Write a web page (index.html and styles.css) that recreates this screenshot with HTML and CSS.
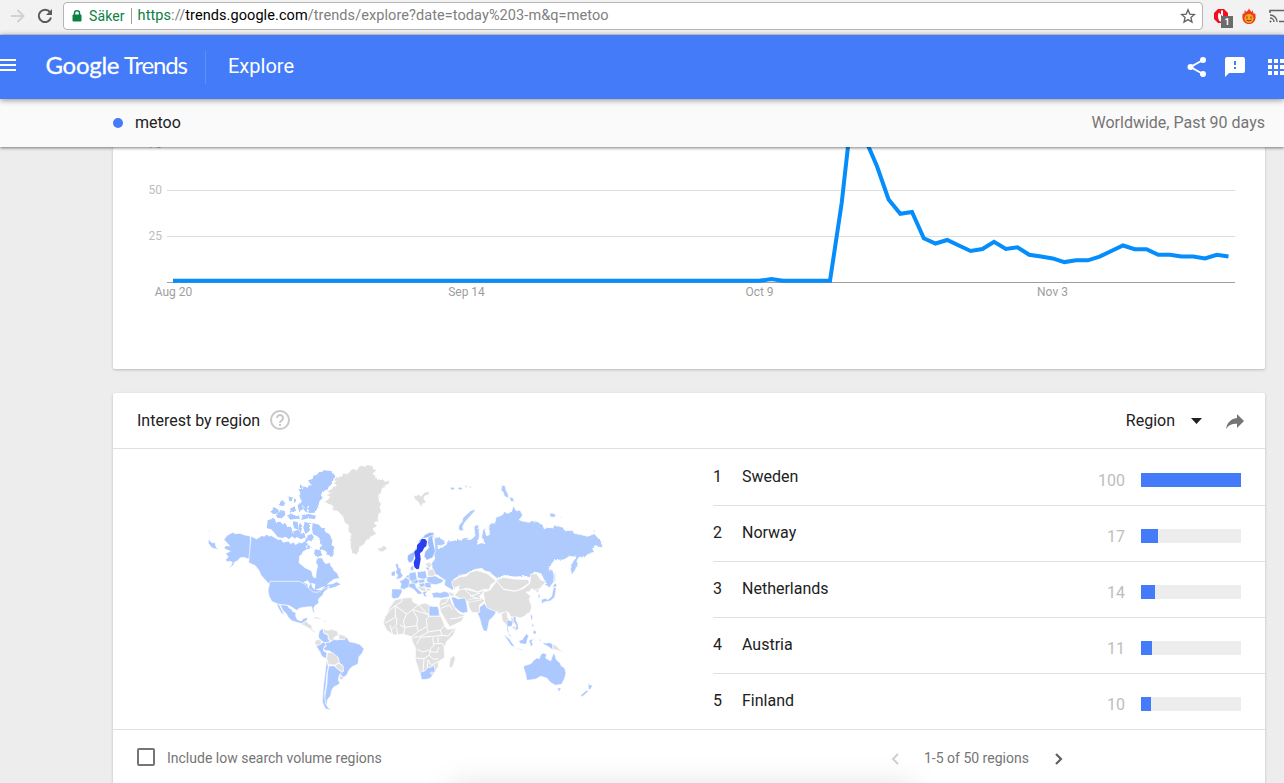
FILE: index.html
```html
<!DOCTYPE html>
<html lang="en">
<head>
    <meta charset="UTF-8">
    <title>metoo - Explore - Google Trends</title>
    <link rel="stylesheet" href="styles.css">
</head>
<body>
    <div class="toolbar">
        <svg class="forward" width="16" height="16" viewBox="0 0 16 16"><path d="M1 8h12M7.500 2l6 6-6 6" fill="none" stroke="#d2d2d2" stroke-width="2"/></svg>
        <svg class="reload" width="16" height="16" viewBox="0 0 16 16"><path d="M13 4.200A6.200 6.200 0 1 0 14 9.500" fill="none" stroke="#5a5a5a" stroke-width="2"/><path d="M15 1v6H9z" fill="#5a5a5a"/></svg>
        <div class="address">
            <svg class="lock" width="10" height="12" viewBox="0 0 10 12"><path d="M1 5h8v6H1z" fill="#0b8043" stroke="#0b8043"/><path d="M2.500 5V3a2.500 2.200 0 0 1 5 0v2" fill="none" stroke="#0b8043" stroke-width="1.500"/></svg>
            <span class="secure">Säker</span>
            <span class="url"><span class="green">https</span>://<b>trends.google.com</b>/trends/explore?date=today%203-m&amp;q=metoo</span>
            <svg class="star" width="16" height="16" viewBox="0 0 16 16"><path d="M8 1.800l1.800 4.300 4.700.4-3.600 3 1.100 4.600L8 11.600l-4 2.500 1.100-4.600-3.600-3 4.700-.4z" fill="none" stroke="#5f6368" stroke-width="1.300"/></svg>
        </div>
        <div class="extensions">
            <div class="blocker">
                <svg width="16" height="16" viewBox="0 0 16 16"><path d="M5 1h6l4 4v6l-4 4H5l-4-4V5z" fill="#f1101c"/><path d="M6 4.500C4.500 6 4.500 11 7 13.500h2L8 10V2.500h2V9" fill="#fff"/></svg>
                <span class="count">1</span>
            </div>
            <svg class="flame" width="14" height="16" viewBox="0 0 14 16"><path d="M7 0c0 2 2 2 2 4 1 0 1-1 1-2 2 3 1 3 2 4l1-1c2 6-1 11-6 11S-1 11 1 5l1 1c1-1 0-2 1-4l1 2c1-1 3-2 3-4z" fill="#ee3b1c"/><circle cx="7" cy="10.500" r="4.500" fill="#f9a825"/><path d="M5 8.500v2M9 8.500v2M4.500 12q2.500 2 5 0" fill="none" stroke="#7a2b0c"/></svg>
            <svg class="cast" width="17" height="14" viewBox="0 0 17 14"><path d="M1 4V1.500h15v11H10" fill="none" stroke="#5f6368" stroke-width="1.600"/><path d="M1 6a7 7 0 0 1 7 7M1 9a4 4 0 0 1 4 4" fill="none" stroke="#5f6368" stroke-width="1.400"/><circle cx="1.500" cy="12.500" r="1" fill="#5f6368"/></svg>
        </div>
    </div>

    <div class="header">
        <svg class="menu" width="16" height="12" viewBox="0 0 16 12"><path d="M0 1h16M0 6h16M0 11h16" stroke="#fff" stroke-width="2"/></svg>
        <svg class="logo" width="146" height="34" viewBox="0 0 146 34">
            <text class="google" x="-.5" y="23.500" textLength="74">Google</text>
            <text x="78" y="23.500" textLength="64">Trends</text>
        </svg>
        <span class="explore">Explore</span>
        <div class="actions">
            <svg width="20" height="20" viewBox="0 0 20 20"><path d="M16 3L3.500 10 16 17" fill="none" stroke="#fff" stroke-width="2"/><g fill="#fff"><circle cx="16" cy="3" r="3"/><circle cx="3.500" cy="10" r="3"/><circle cx="16" cy="17" r="3"/></g></svg>
            <svg width="20" height="20" viewBox="0 0 20 20"><path d="M2 0h16a2 2 0 0 1 2 2v12a2 2 0 0 1-2 2H4l-4 4V2a2 2 0 0 1 2-2z" fill="#fff"/><path d="M10 4v4M10 10v2" stroke="#437bf8" stroke-width="2"/></svg>
            <svg width="16" height="16" viewBox="0 0 16 16"><path d="M0 2h16M0 8h16M0 14h16" stroke="#fff" stroke-width="4" stroke-dasharray="4 2"/></svg>
        </div>
    </div>

    <div class="terms">
        <span class="dot"></span>
        <span class="term">metoo</span>
        <span class="scope">Worldwide, Past 90 days</span>
    </div>

    <div class="content">
        <div class="card chart">
            <svg width="1152" height="222" viewBox="113 147 1152 222">
                <path d="M167 190.500H1235M167 236.500H1235" stroke="#dedede"/>
                <path d="M167 282.500H1235" stroke="#9e9e9e"/>
                <g class="ylabel"><text x="162" y="148">75</text><text x="162" y="194">50</text><text x="162" y="240">25</text></g>
                <g class="xlabel"><text x="173.500" y="296">Aug 20</text><text x="466.500" y="296">Sep 14</text><text x="759.500" y="296">Oct 9</text><text x="1052.500" y="296">Nov 3</text></g>
                <polyline class="line" points="173,280.800 759.500,280.800 771.300,279 783,280.800 830,280.800 841.700,203 853.400,98 865.200,139 876.900,166 888.600,199.500 900.300,213.800 912,212 923.800,238.300 935.500,243.500 947.200,240 958.900,245.500 970.600,251 982.400,249 994.100,241.900 1005.800,249 1017.500,247.300 1029.200,254.800 1041,256.600 1052.700,258.400 1064.400,262.100 1076.100,260.300 1087.900,260.300 1099.600,256.600 1111.300,251 1123,245.500 1134.700,249.200 1146.500,249.200 1158.200,254.800 1169.900,254.800 1181.600,256.600 1193.300,256.600 1205,258.400 1216.800,254.800 1228.500,256.600"/>
            </svg>
        </div>

        <div class="card regions">
            <div class="card-head">
                <span class="title">Interest by region</span>
                <svg class="help" width="20" height="20" viewBox="0 0 20 20"><circle cx="10" cy="10" r="9" fill="none" stroke="#c8c8c8" stroke-width="2"/><path d="M7 8a3 3 0 1 1 5 2.200Q10 11.500 10 13M10 14v2" fill="none" stroke="#c8c8c8" stroke-width="2"/></svg>
                <span class="select">Region</span>
                <svg class="caret" width="11" height="6" viewBox="0 0 11 6"><path d="M0 0h11L5.500 6z" fill="#212121"/></svg>
                <svg class="share" width="18" height="15" viewBox="0 0 18 15"><path d="M11 0l7 7-7 7v-4.300C6 9.700 2.500 11 0 15 1 9.500 4 5 11 4z" fill="#757575"/></svg>
            </div>
            <div class="card-body">
                <div class="map">
                    <svg width="410" height="265" viewBox="0 0 1230 795">
                        <filter id="coast" x="-5%" y="-5%" width="110%" height="110%">
                            <feTurbulence type="fractalNoise" baseFrequency=".25" numOctaves="2" seed="4"/>
                            <feDisplacementMap in="SourceGraphic" scale="7" xChannelSelector="R" yChannelSelector="G"/>
                        </filter>
                        <!-- North America -->
                        <g class="land">
                            <path d="M72 254l8-12 18-10 8 4 14-1 14 5 17 3v69l-12-2-9-3-10 2-8 9-8 3-4 10-8 6-14 7 14-10 5-12-7-3-10 1-3-6 8-8-8-11 14-6-18-8 2-9 14 1z"/>
                            <path d="M25 252l12 12 8-2 3 14 8 7-14-2-8-4-9-12zM26 225l6 5-4 2z"/>
                            <path d="M153 243l17 9 15-10 8 2 7-6 6 5 9-1 20 12 7-2 8 10 15-4 7 8 9-5 5 8 12-7 7 2 10-6 2-13 10 10-8 8 8 3-9 9 5 8-14 7-4 9-6 4-2 20 18 15 20 10 4 17 8 4 2-21 4-15-6-12 6-13 14 1 5 12 7 5 10-4 5 13 5 3 2 8 11 9 7 15-17 3-10 7-10 8 17-2 10-6 8 4 7 4-18 8-12 4-15 1-20 10-15 8-12-2-8-13-15-10-15-8h-88l-12-13-10-11-8-17-10-13-20-9z"/>
                            <path d="M210 379h88l18 9 12 14 12 9 12 1 16-9 20-10-5 9-11 9-4 10-7 5-6 8 2 10-12 8-4 8 4 17-7-8-3-14-15 1-20 3-10 7-8-5-7-5-10-5-25-2-12-4-13-6-8-16-3-17z"/>
                            <path d="M240 449l22 2 6 9 7 2 2 7 11 4-1 10 5 11 12 4 8-8 12-3-5 12-14 7-15-4-15-5-11-11-6-11-9-8zM229 445l9 4 8 17 7 13-9-4-9-16z"/>
                        </g>
                        <g class="land arctic" filter="url(#coast)">
                            <path d="M324 76l14-5 2-9 10-3 8-9 8 1 5-5 16 1 6 4 13 11-4 12-8 8 3 4-11 9-2 8-16 6-5 12 5 9-9 7-3 12-3 8-6 8-16-4-6-9-10 5-14-12 6-9-7-6-2-10 4-7-7-10 14-1 1-8 13 4 4-8 8 2zM300 88l9 8-9 10zM300 112l10 6-8 10z"/>
                            <path d="M338 204l19 5 7 9 9 2 4 12 11 5 9 18-2 15 8 6-2 18-4 12-16-8-9-13-14-3 9-11-8-6 2-10-9-11-13-6-3-15zM203 196l20-6 5 12 10-2 10 8 9-2 6 10 10-1 7 25-13 13-9-7-11 3-14-3-11-14-5-8-17-5zM283 228l12-4 7 13 9-4 6 14-14 6-12-7-8 5-6-9zM322 242l12-6 8 10-8 13-12-5z"/>
                            <path d="M211 170l10-14 15 8-4 12-12 1zM228 182l12-17 14 3 2 12-11 10-12-1zM236 150l12-15 8 11-8 8zM261 182l11-7 13 8 10-4 5 12-17 1-12 2zM270 161l14-7 4 14-14 3zM293 150l13-7 3 20-12 6zM311 143l12 10-3 20-10-10zM323 160l18-12 11 10-8 15-18 1zM305 181l21-4 22 5-4 11-18-3-20 4zM278 199l15 2 3 23-14-4zM298 202l9 11-5 24-6-15zM314 201l16 4-2 24-12 8-6-18zM266 124l13 5-4 10-8-2zM241 138l4 5-5 5zM282 130l7 7-7 8zM345 283l15 3 7 15-14 5-11-10zM323 270l9 4-4 9-7-3z"/>
                        </g>
                        <path class="lake" d="M310 382l13-6 8 10-5 14-4-12zM333 383l13 4-2 17-8-8zM345 405l17-7 14-6-12 13zM322 310l8 12 7-5"/>
                        <path class="land grey" filter="url(#coast)" d="M370 140l13-6 7-8-12-6 14-5-12-8 15-5 4-8 11-1-8-8 5-5-8-8 14-5 13-3 2-9 16 1 8-9 6-6 14 3 4-9 13-5 3 5 12-6 14 4 2 8 9 5-11 11 12 5-3 8 13 3 8-1 8 8 11-4 2 8-10 7-11 5-4 16-8 10 2 18 8 4-7 13 6 10-9 11-2 19-12 7 10 8-14 10 12 15-18 8-5 8-9 4-7 13-12 5-2 13-7 12-12-5-6-15-2-24 2-20-8-8 2-17-12-8-6-19-16-16-18-4 5-11z"/>
                        <g class="land grey">
                            <path d="M533 278l10 1 8-8 11 8-9 8-7 4-11-4zM303 507l15-9 7 7 11 7-1 10 10 8 10-2-12 5-16-13-14-8zM335 488l15-3 20 9-16-2zM366 496l14 3-7 3z"/>
                        </g>
                        <!-- South America -->
                        <g class="land" transform="translate(0 345)">
                            <path d="M358 182l12-7 2 15 13 5v11l6 8-16 6-17-12-3-9z"/>
                            <path d="M348 228l14-7 8-5 12 6-10 10-1 11 10 5-2 18-14-7-5-13z"/>
                            <path d="M375 218l16-2 8-10 9 4 20-3 12-6 8 14 16 3 15 5 13 13-5 13-10 11-3 22-19 9-9 11-5 12-11 9-10-10 9-13-2-15-10-6-3-16-15-8-9-12-12-1-9-5 10-9z"/>
                            <path d="M386 288l16-1 18 16 10 1-12 11-3 15 5 9-8 7-10 4-7 11-3 16-10 13-2 17-5-9-1-18 7-40 1-30z"/>
                            <path d="M380 268l5 22-5 25-2 30-4 25 2 30 8 12 9 9-17-5-9-19 3-48 5-38z"/>
                        </g>
                        <g class="land grey" transform="translate(0 345)">
                            <path d="M370 178l15 3 8-3 17 4 6 12-13 8-6 11-12-5-1-15-12-3zM416 193l12 2 12 6-6 8-17-1zM347 210l15-1 3 11-14 8-7-9zM383 247l15 1 16 14 4 15-13 8-20-1-5-19zM404 285l14-5 12 9v15l-10-2-12-10zM419 314l13 8-4 8-11-3z"/>
                        </g>
                        <!-- Europe and Asia -->
                        <g class="land light" transform="translate(510 0)">
                            <path filter="url(#coast)" d="M187 345l-2-20 10-15-5-15 5-20-3-28 13 0 17 8 4 11-14 7-9-2 2 11 10-6 13-6 7-13 7 1 16-3 8-2 6 5 8-9 9-1 8 6 8-2 10-10-3-26 5-5 8-2 2 17 1 20-6 22 13-5 10 4-10-20 3-20 12-14-5 14 5 15 10-4-5-21 5-10 15-4 3-16 17-6 9-9 11 3 10-7 5-14 10 14 10-3 8 16-10 14 12 4 18 3 7-5 18 3 15 9 5 13 11-6 14 3 5-9 9 4 16 2 7 11 23-1 5 9 25 5 15 4 20-8 20 22 6 20-11-2-13-5-7 10 5 10-20 7-10 10-15-2-7 10 2 15-8 15-10 14-4-19 7-20 10-15-20-2-15 10-30 2-18 25 13 5 5 15-2 20-13 17-10-7-5-15-10-20-20-5-10 17-20-4-30 2-30-5-20 10-10-7-15-13-14-3-8-8-13 1-20 7-15 10-20 3-17 13 2 22-5 10-25-15 2-15-17-12-15-8z"/>
                            <path d="M315 163l-13 4-13 12-11 10-1 10-10 12-2 12 8 5 8-2-3-11 6-12 14-16 17-19zM396 90l10 3 2 13 6 10 2 14-13-6-3-12-7-6zM418 126l11 2 4 13-11-2zM538 174l11 1 10 5-7 7-11-1zM569 185l9 2-5 2zM554 348l3 10-1 24-4-2zM240 98l10-2 5 6-9 4zM262 100l10-4 8 7-11 2zM283 90l10 3-4 5zM296 96l9-2-3 6zM668 225l10 2-5 4z"/>
                            <path d="M185 414l15-3 11 2 12-4 14 4 2 12-24 5-14-2-11 1zM335 437l15 16 12 9 18 6-8 14-14 14-5 26-3 7-9-1-7-18-4-17-8-20 8-18 11-8zM380 465l20-1-8 12-10-2zM172 365l23-3 14 8 13 5-9 10-16 4-18-2-10-9z"/>
                            <path d="M515 433l12-3 6 4 12-10 3-16 3-11 8-2-2 17-3 15-13 11-15 2-12 7zM547 396l8-12 6 6-5 8zM504 413l7 11-6 8z"/>
                        </g>
                        <g class="land grey" transform="translate(510 0)">
                            <path d="M245 380l23-14 22-3 10-11 20-6 32 10 16 13 11 10-17 10-4 16-13-3-23 8-22-8-15-2-10 5-10-3 3-10-13 7-7-4zM378 376l22-9 30 5 45 2 3 10-23 16-20 8-35-6zM340 412l20-7 20-27 20 25 35 6 25-8 20-16 2-28 18-1 12 19 16 5-18 20-10 10-15-9-7 9-10 1 14 13-5 9 8 20-4 18-12 7-6 6-12 5-14-4-14 1-8-14-20 1-20-4-25-11-6-19z"/>
                            <path d="M266 405l19-3 37 10 23-6-8 9-8 8 5 12-23 4-16 3-25-12-16-8zM293 435l18-4 24-1 10 7-17 14 1 21-23 1-9-16zM212 433l28-5 8 22 17 23 20 8-10 17-36 18-12-21-15-25-5-24zM165 325l17-3 2 14-9 3zM173 345l16-4 8 18-8 5-16-1zM138 392l28 6 2 12-13-2zM168 400l15 0-5 9-9-2zM235 410l14 4 5 9-14 0zM494 405l15-4-5 13z"/>
                            <path d="M131 120l8 3 6-6 7 7 12-12 15-3-3 10-12 4-2 8 7 12-11 3-5 11-5-10-6-8-9-8zM394 476l16-8 3 18 8 18-12 7-13-16zM421 486l9 3 5 20-10-7zM428 514l10-2-3 12-9-4z"/>
                            <path class="line-only" d="M212 448l15-3 10-17M213 460l25-10 10 14M240 492l22-3 22-6M285 404l20 20 20 8M300 424l30-10"/>
                        </g>
                        <g class="land" transform="translate(510 0)">
                            <path d="M243 425l12 2 10 5 20-4 5 18 4 24-14 5-13-6-14-14z"/>
                            <path class="norway" d="M192 233l-12-1-7 3-9 4-5 8-12 9-7 19-8 15-14 7-6 6v12l6 9 7-2 6-8 5-18 10-30 14-16 20-3 11 1z"/>
                            <path class="norway" d="M175 247l13-7 1 16 7 33-8 19-18 8-8-12 3-14 11-12-4-14z"/>
                            <path class="dense" d="M76 328l8-2 2 12 7 4-1 9 7 11-8 8-13 3 6-12-7-9 4-8zM64 352l11-5v15l-10 1zM121 338l9-7 1 13-8 3zM89 378l11-4 7-7 12 9-2 19-15 8-11-3 3-13zM66 402l29 1 1 8-10 17-15 3-6-5zM118 354l19-3 4 23-14 6-11-8zM142 351l25-3 4 21-11 3-17-4zM108 363l9-4 2 11-10-3zM123 378l18-5 8 5-10 8-14-1zM144 375l20-2 0 9-16 3zM147 387l15-3 4 8-14 5zM164 383l17 0 3 15-18-1zM117 386l17-3 4 14 12 12 7 4-6 5-7-1-11-13-9-6-9-2zM158 412l14-4-6 9 5 9-9-3zM166 337l14 1-7 8z"/>
                            <path class="sweden" d="M150 262l5-10 10 0 6 7-2 14-7 6-4 9-8 7 2 18-3 16-2 12-7 2-7-7-2-14 5-12-3-20 8-8v-12z"/>
                        </g>
                        <!-- Africa -->
                        <g class="land grey" transform="translate(510 345)">
                            <path d="M75 90l20-5 30-3 3 13 17 9 20-5 13 6 25 5 3 15 9 20 10 25 7 8 26-3-8 20-20 20-8 20 2 27-19 16v12l-10 15-15 20-25 3-7-23-12-35 1-35-10-20-2-15-25-8-30 3-20-15-10-20 5-20 15-30zM253 255l3 12-10 27-8-4 2-24z"/>
                            <path class="line-only" d="M95 85v10L76 107l34 25 18-13 18-15M76 107l-17 14-12 17M76 107v35l-32 18M110 132l-10 22 5 18 35-5 3-22-15-26M128 119l49 15v4l-8 12 3 20M146 104l31 34h32M80 142v22l-15 15M60 165l8 30M90 165l15 7-5 22M80 172l2 20M140 167l5 18-20 15M145 185l24-15 6 16-25 14-20 2M175 186l36-6 12-12M211 180l5 16 18 2 18-20M216 196l-28 3-36 3-12 20M188 200l3 26-12 14-22 6-16-8M191 222l25-2 10 16M204 200v18M182 240l-4 15-16 11-25-2M178 245l24 2 4-16M162 266l-3 40M178 256l12 12 14-2M174 270l10 16 14-8 26-14M174 270l-2 27"/>
                        </g>
                        <g class="land" transform="translate(510 345)">
                            <path d="M177 107l10 3 16-1 4 12 1 17h-31zM150 307l15-4 8-10 9-1 11-6 2 18-13 20-11 4-16 1z"/>
                            <path class="dense" d="M412 150l16 4-2 14-13 2 3 20 9 11-7-4-7-18zM430 140l8 1-1 9 6 12 2 14-10 6 4-15-8-14zM402 193l16 14 17 25-12-6zM430 233l32 6-10 0zM447 212l10-3 6-9 6-8 7 5-4 10-4 16-18-3zM480 209l12-1-8 6 5 9-7 7-1-11-4-2zM482 133l5 4 0 13-4-4zM486 159l6 8-5 4zM492 180l7 6-3 7-7-4zM510 205l3 7-4 2zM517 218l12 2 8-2 11 4v17l-14-10-8-4z"/>
                            <path d="M460 290l6-4 17-5 7-9 10-8 8 2 4-12 8-5 10 4-3 11 15 9 8-23 5 6 4 13 12 11 3 8 10 6 4 15-4 16-9 18-19 3-15-9-11-13-18-5-14 8-17 3-11 1-3-18z"/>
                            <path class="dense" d="M562 354l11 1-6 10zM655 340l5 6 8-1-7 13-5 0zM650 361l5 2-12 12-8 5-2-4z"/>
                        </g>
                        <path class="land grey" transform="translate(510 345)" d="M549 221l13 9 5 7 14 10-20-6-12-3zM185 305l5 3-5 6-4-5zM352 183l4 3-4 4z"/>
                    </svg>
                </div>
                <div class="list">
                    <div class="row"><span class="rank">1</span><span class="name">Sweden</span><span class="value">100</span><div class="bar"><div class="fill" style="width: 100%"></div></div></div>
                    <div class="row"><span class="rank">2</span><span class="name">Norway</span><span class="value">17</span><div class="bar"><div class="fill" style="width: 17%"></div></div></div>
                    <div class="row"><span class="rank">3</span><span class="name">Netherlands</span><span class="value">14</span><div class="bar"><div class="fill" style="width: 14%"></div></div></div>
                    <div class="row"><span class="rank">4</span><span class="name">Austria</span><span class="value">11</span><div class="bar"><div class="fill" style="width: 11%"></div></div></div>
                    <div class="row"><span class="rank">5</span><span class="name">Finland</span><span class="value">10</span><div class="bar"><div class="fill" style="width: 10%"></div></div></div>
                </div>
            </div>
            <div class="card-foot">
                <span class="checkbox"></span>
                <span class="low">Include low search volume regions</span>
                <svg class="prev" width="8" height="12" viewBox="0 0 8 12"><path d="M7 1L2 6l5 5" fill="none" stroke="#d0d0d0" stroke-width="2"/></svg>
                <span class="pages">1-5 of 50 regions</span>
                <svg class="next" width="8" height="12" viewBox="0 0 8 12"><path d="M1 1l5 5-5 5" fill="none" stroke="#616161" stroke-width="2.200"/></svg>
            </div>
        </div>
    </div>
    <div class="dock"></div>
</body>
</html>
```
FILE: styles.css
```css
*{
    box-sizing: border-box;
}
html{
    overflow: hidden;
}
body{
    margin: 0;
    height: 783px;
    overflow: hidden;
    position: relative;
    background: #ededed;
    font-family: Roboto, sans-serif;
    font-size: 16px;
    color: #212121;
}
svg{
    display: block;
    flex: none;
}
span{
    white-space: nowrap;
}
/* browser bar */
.toolbar{
    display: flex;
    align-items: center;
    height: 35px;
    padding: 0 0 3px 10px;
    background: #f2f2f2;
    border-bottom: 1px solid #d5d5d5;
}
.reload{
    margin-left: 11px;
}
.address{
    display: flex;
    align-items: center;
    width: 1140px;
    height: 28px;
    margin-left: 10px;
    padding: 0 6px 0 8px;
    flex: none;
    background: #fff;
    border: 1px solid #b4b4b4;
    border-radius: 4px;
    font-size: 14.500px;
}
.secure{
    margin-left: 7px;
    padding-right: 6px;
    border-right: 1px solid #a0a0a0;
    font-size: 14px;
    letter-spacing: .1px;
    line-height: 16px;
    color: #0b8043;
}
.url{
    margin-left: 6px;
    letter-spacing: .08px;
    color: #808080;
}
.url b{
    font-weight: normal;
    color: #000;
}
.green{
    color: #0b8043;
}
.star{
    margin-left: auto;
}
.extensions{
    display: flex;
    align-items: center;
    margin-left: 10px;
}
.blocker{
    position: relative;
}
.count{
    position: absolute;
    left: 8px;
    top: 8px;
    width: 12px;
    height: 12px;
    background: #6b6b6b;
    color: #fff;
    font: bold 9px/12px Roboto, sans-serif;
    text-align: center;
}
.flame{
    margin-left: 13px;
}
.cast{
    margin-left: 13px;
}
/* header */
.header{
    position: relative;
    z-index: 2;
    display: flex;
    align-items: center;
    height: 64px;
    background: #437bf8;
    color: #fff;
    box-shadow: 0 1px 6px rgba(0,0,0,.45);
}
.menu{
    margin-bottom: 4px;
}
.logo{
    margin-left: 30px;
    fill: #fff;
    font-family: Lato, sans-serif;
    font-size: 24px;
    overflow: visible;
}
.google{
    font-weight: 400;
    stroke: #fff;
    stroke-width: .3;
}
.explore{
    margin-left: 13px;
    padding: 0 0 2px 22px;
    border-left: 1px solid #628ff5;
    font-size: 20px;
    line-height: 31px;
}
.actions{
    display: flex;
    align-items: center;
    gap: 18px;
    margin-left: auto;
}
.actions svg:last-child{
    margin-left: 5px;
}
.terms{
    position: relative;
    z-index: 1;
    display: flex;
    align-items: center;
    height: 48px;
    padding: 0 19px 0 113px;
    background: #fafafa;
    box-shadow: 0 1px 3px rgba(0,0,0,.5);
}
.term, .scope{
    padding-bottom: 2px;
}
.dot{
    width: 10px;
    height: 10px;
    margin-right: 12px;
    border-radius: 50%;
    background: #437bf8;
}
.scope{
    margin-left: auto;
    color: #757575;
}
/* cards */
.content{
    width: 1152px;
    margin-left: 113px;
}
.card{
    background: #fff;
    border-radius: 2px;
    box-shadow: 0 1px 3px rgba(0,0,0,.22);
}
.chart{
    height: 222px;
    margin-bottom: 24px;
}
.chart text{
    font-size: 12px;
}
.ylabel{
    fill: #bdbdbd;
    text-anchor: end;
}
.xlabel{
    fill: #9e9e9e;
    text-anchor: middle;
}
.line{
    fill: none;
    stroke: #058dfc;
    stroke-width: 4;
}
.card-head{
    display: flex;
    align-items: center;
    height: 56px;
    padding: 0 21px 0 24px;
    border-bottom: 1px solid #e0e0e0;
}
.help{
    margin: 0 0 1px 10px;
}
.select{
    margin-left: auto;
}
.caret{
    margin-left: 16px;
}
.share{
    margin: 2px 0 0 24px;
}
.card-body{
    display: flex;
    height: 281px;
    border-bottom: 1px solid #e0e0e0;
}
.map{
    width: 600px;
    padding: 6px 0 0 87px;
}
.land{
    fill: #abc8ff;
    stroke: #fff;
    stroke-width: 2;
    stroke-linejoin: round;
}
.light{
    fill: #afcbfd;
}
.arctic{
    stroke: none;
}
.dense{
    stroke-width: 1;
}
.grey{
    fill: #e0e0e0;
}
.norway{
    fill: #9cbdfc;
}
.sweden{
    fill: #2a40ee;
    stroke: none;
}
.lake{
    fill: #fff;
}
.line-only{
    fill: none;
    stroke-width: 3;
}
.list{
    flex: 1;
}
.row{
    display: flex;
    height: 56px;
    padding-right: 24px;
    line-height: 56px;
}
.row + .row{
    border-top: 1px solid #e0e0e0;
    line-height: 54px;
}
.rank{
    width: 29px;
}
.value{
    margin-left: auto;
    padding-top: 4px;
    color: #bdbdbd;
}
.bar{
    width: 100px;
    height: 14px;
    margin: 24px 0 0 16px;
    background: #ededed;
}
.row + .row .bar{
    margin-top: 23px;
}
.fill{
    height: 14px;
    background: #437bf8;
}
.card-foot{
    display: flex;
    align-items: center;
    height: 56px;
    padding-left: 24px;
    font-size: 14px;
    color: #757575;
}
.checkbox{
    width: 18px;
    height: 18px;
    margin-bottom: 2px;
    border: 2px solid #757575;
    border-radius: 2px;
}
.low{
    width: 724px;
    margin-left: 12px;
}
.prev, .next{
    margin-top: 1px;
}
.pages{
    margin: 0 26px 0 25px;
}
/* soft shadow along the bottom edge of the screen */
.dock{
    position: absolute;
    left: 455px;
    top: 790px;
    width: 455px;
    height: 40px;
    box-shadow: 0 0 32px 4px rgba(0,0,0,.13);
}
```
